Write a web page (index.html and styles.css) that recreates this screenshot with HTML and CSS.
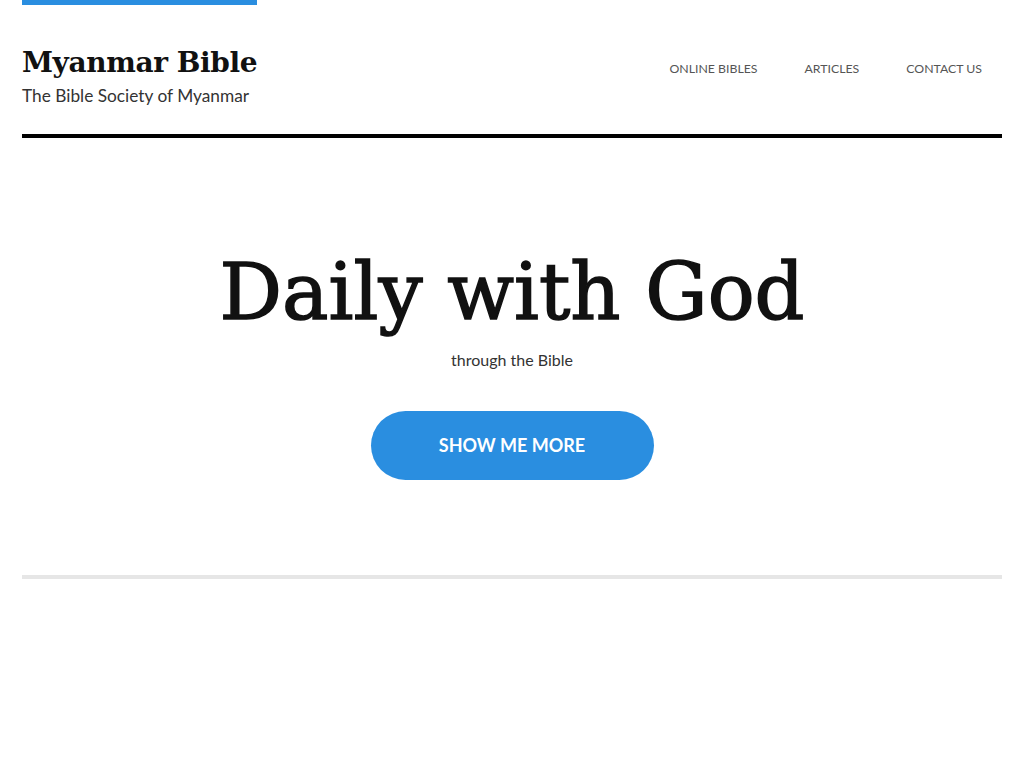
FILE: index.html
```html
<!DOCTYPE html>
<html lang="en">
<head>
    <meta charset="UTF-8">
    <meta name="viewport" content="width=device-width, initial-scale=1.0">
    <title>Myanmar Bible</title>
    <link rel="stylesheet" href="styles.css">
</head>
<body>
    <div class="page">
        <header class="site-header">
            <div class="brand">
                <div class="brand-bar"></div>
                <h1 class="site-title">Myanmar Bible</h1>
                <p class="site-tagline">The Bible Society of Myanmar</p>
            </div>
            <nav class="main-nav">
                <a href="#">Online Bibles</a>
                <a href="#">Articles</a>
                <a href="#">Contact Us</a>
            </nav>
        </header>

        <section class="hero">
            <h2 class="hero-title">Daily with God</h2>
            <p class="hero-sub">through the Bible</p>
            <a class="hero-button" href="#">Show me more</a>
        </section>

        <div class="divider"></div>
    </div>
</body>
</html>
```

FILE: styles.css
```css
body {
    margin: 0;
    background-color: #fff;
    font-family: Lato, "Open Sans", sans-serif;
    color: #222;
}
.page {
    margin: 0 22px;
}
.site-header {
    display: flex;
    justify-content: space-between;
    align-items: flex-start;
    border-bottom: 4px solid #000;
    height: 134px;
}
.brand-bar {
    width: 235px;
    height: 5px;
    background-color: #2a8ee0;
}
.site-title {
    margin: 40px 0 0;
    font-family: "DejaVu Serif", serif;
    font-weight: bold;
    font-size: 28px;
    line-height: 36px;
    color: #111;
    letter-spacing: -0.4px;
}
.site-tagline {
    margin: 4px 0 0;
    font-size: 17.3px;
    color: #333;
}
.main-nav {
    display: flex;
    margin-top: 60px;
}
.main-nav a {
    padding: 0 20px 0 27px;
    font-size: 12.3px;
    line-height: 18px;
    text-transform: uppercase;
    text-decoration: none;
    color: #555;
}
.hero {
    display: flex;
    flex-direction: column;
    align-items: center;
    padding-top: 104px;
    height: 333px;
}
.hero-title {
    margin: 0;
    font-family: "DejaVu Serif", serif;
    font-weight: normal;
    font-size: 78px;
    line-height: 100px;
    color: #111;
    -webkit-text-stroke: 1.5px #111;
}
.hero-sub {
    margin: 8px 0 0;
    font-size: 16px;
    color: #333;
}
.hero-button {
    margin-top: 42px;
    width: 283px;
    height: 69px;
    line-height: 69px;
    border-radius: 35px;
    background-color: #2a8ee0;
    color: #fff;
    text-align: center;
    font-weight: bold;
    font-size: 18px;
    text-transform: uppercase;
    text-decoration: none;
}
.divider {
    height: 4px;
    background-color: #e6e6e6;
}
```
